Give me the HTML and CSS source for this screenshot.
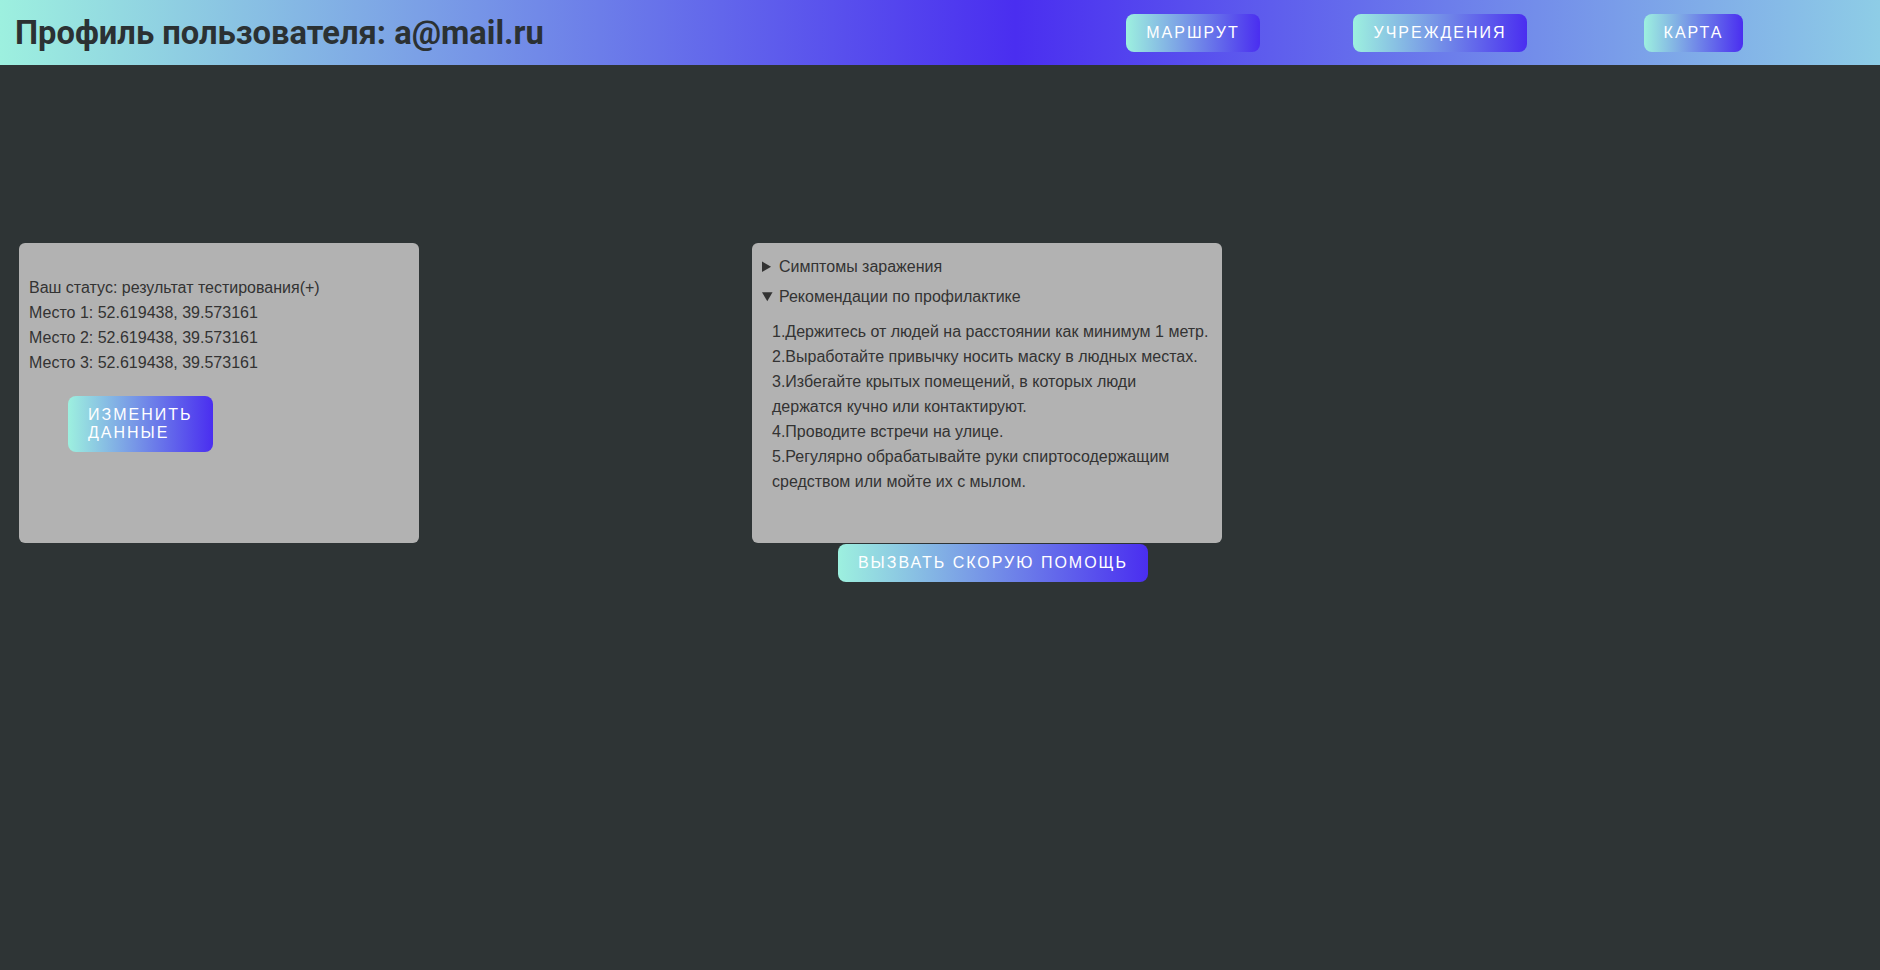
FILE: index.html
```html
<!DOCTYPE html>
<html lang="ru">
<head>
<meta charset="utf-8">
<title>Профиль пользователя</title>
<link rel="stylesheet" href="styles.css">
</head>
<body>
<header class="topbar">
  <h1 class="title">Профиль пользователя: a@mail.ru</h1>
  <nav class="nav">
    <div class="nav-cell"><button class="btn">Маршрут</button></div>
    <div class="nav-cell"><button class="btn">Учреждения</button></div>
    <div class="nav-cell"><button class="btn">Карта</button></div>
  </nav>
</header>
<main class="content">
  <section class="card card-status">
    <p class="line">Ваш статус: результат тестирования(+)</p>
    <p class="line">Место 1: 52.619438, 39.573161</p>
    <p class="line">Место 2: 52.619438, 39.573161</p>
    <p class="line">Место 3: 52.619438, 39.573161</p>
    <button class="btn btn-edit">Изменить данные</button>
  </section>
  <div class="info-col">
    <section class="card card-info">
      <details class="info-block">
        <summary class="info-summary">Симптомы заражения</summary>
      </details>
      <details class="info-block" open>
        <summary class="info-summary">Рекомендации по профилактике</summary>
        <div class="tips">
          <div class="tip">1.Держитесь от людей на расстоянии как минимум 1 метр.</div>
          <div class="tip">2.Выработайте привычку носить маску в людных местах.</div>
          <div class="tip">3.Избегайте крытых помещений, в которых люди держатся кучно или контактируют.</div>
          <div class="tip">4.Проводите встречи на улице.</div>
          <div class="tip">5.Регулярно обрабатывайте руки спиртосодержащим средством или мойте их с мылом.</div>
        </div>
      </details>
    </section>
    <button class="btn btn-help">Вызвать скорую помощь</button>
  </div>
</main>
</body>
</html>
```

FILE: styles.css
```css
* { box-sizing: border-box; }

html, body {
  margin: 0;
  padding: 0;
}

body {
  background: #2e3435;
  min-height: 100vh;
  font-family: "Liberation Sans", Arial, sans-serif;
  font-size: 16px;
  color: #333333;
}

.topbar {
  height: 65px;
  display: flex;
  align-items: center;
  padding-left: 15px;
  background: linear-gradient(to right, #9df0df 0%, #4a2ef0 54%, #8ecde6 100%);
}

.title {
  margin: 0;
  font-family: Roboto, "Liberation Sans", sans-serif;
  font-weight: 700;
  font-size: 32.7px;
  color: #2b3133;
  white-space: nowrap;
}

.nav {
  margin-left: auto;
  margin-right: 55px;
  display: grid;
  grid-template-columns: 250px 244px 263px;
  justify-items: center;
  align-items: center;
}

.btn {
  border: none;
  border-radius: 8px;
  background: linear-gradient(to right, #9df0df 0%, #4a2ef0 100%);
  color: #ffffff;
  font-family: "Liberation Sans", Arial, sans-serif;
  font-size: 16px;
  line-height: 18px;
  letter-spacing: 2px;
  text-transform: uppercase;
  padding: 10px 20px;
  cursor: pointer;
  text-align: left;
}

.content {
  display: flex;
  align-items: flex-start;
  padding: 178px 0 0 19px;
}

.card {
  background: #b2b2b2;
  border-radius: 6px;
  height: 300px;
}

.card-status {
  width: 400px;
  padding: 32px 10px 10px 10px;
}

.line {
  margin: 0;
  line-height: 25px;
}

.btn-edit {
  display: block;
  width: 145px;
  margin: 21px 0 0 39px;
}

.info-col {
  margin-left: 333px;
  width: 470px;
  display: flex;
  flex-direction: column;
  align-items: center;
}

.card-info {
  width: 470px;
  padding: 11px 10px 10px 10px;
}

.info-block {
  margin-bottom: 5px;
}

.info-summary {
  line-height: 25px;
  cursor: pointer;
}

.tips {
  padding: 10px 3px 0 10px;
}

.tip {
  line-height: 25px;
}

.btn-help {
  margin-top: 1px;
  margin-left: 12px;
}
```
